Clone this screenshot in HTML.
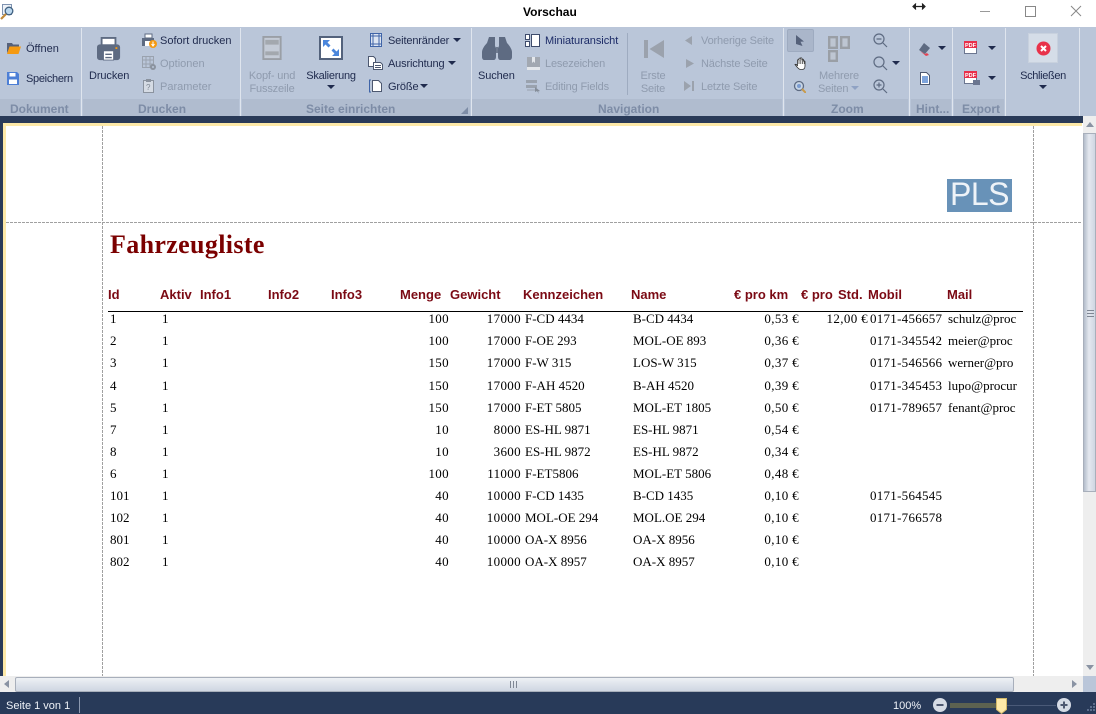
<!DOCTYPE html>
<html><head><meta charset="utf-8"><style>
html,body{margin:0;padding:0;width:1096px;height:714px;overflow:hidden;background:#fff;font-family:"Liberation Sans",sans-serif}
div,span,svg{position:absolute}
.t{font-size:11px;color:#1f2a4d;white-space:nowrap;line-height:13px;letter-spacing:-.15px;margin-top:1px}
.g{color:#8f9bae}
.gt{font-size:12px;font-weight:bold;color:#7d8ca6;white-space:nowrap;line-height:13px;text-align:center;margin-top:1px}
.gb{background:#b0bccf;height:17px;top:99px}
.sep{width:1px;background:#dfe5ee;top:28px;height:88px}
.c{text-align:center}
.h{font:bold 13px/14px "Liberation Sans",sans-serif;color:#7b0a14;white-space:nowrap;top:288px}
.r{font:13px/14px "Liberation Serif",serif;color:#000;white-space:nowrap}
.ar{text-align:right;letter-spacing:.35px}
span.r[style*="left:870px"]{letter-spacing:.27px}
.arw{width:0;height:0;border-left:4px solid transparent;border-right:4px solid transparent;border-top:4px solid #1f2a4d}
</style></head><body>

<!-- title bar -->
<div style="left:0;top:0;width:1096px;height:27px;background:#fff"></div>
<svg style="left:0;top:4px" width="15" height="16" viewBox="0 0 15 16"><path d="M2.500.500h9v10h-9z" fill="#eef2f7" stroke="#7f93b0"/><circle cx="9" cy="7" r="3.800" fill="#bcd8ee" stroke="#3f5f80" stroke-width="1.300"/><path d="M6 10l-5 5" stroke="#c08a3a" stroke-width="2.200"/></svg>
<span style="left:523px;top:5px;font-size:12px;font-weight:bold;line-height:14px;color:#000">Vorschau</span>
<svg style="left:912px;top:2px" width="14" height="9" viewBox="0 0 14 9"><path d="M1 4.500h12M4 1.500L1 4.500l3 3M10 1.500l3 3-3 3" fill="#222" stroke="#222" stroke-width="1.200"/></svg>
<div style="left:980px;top:11px;width:10px;height:1px;background:#999"></div>
<div style="left:1025px;top:6px;width:9px;height:9px;border:1px solid #888"></div>
<svg style="left:1070px;top:5px" width="12" height="12" viewBox="0 0 12 12"><path d="M1 1l10 10M11 1L1 11" stroke="#888" fill="none"/></svg>

<!-- ribbon -->
<div style="left:0;top:27px;width:1096px;height:89px;background:#bac6d9"></div>
<div style="left:0;top:116px;width:1083px;height:7px;background:#293a58"></div>
<div class="gb" style="left:0;width:80px"></div>
<div class="gb" style="left:83px;width:156px"></div>
<div class="gb" style="left:242px;width:228px"></div>
<div class="gb" style="left:472px;width:310px"></div>
<div class="gb" style="left:785px;width:123px"></div>
<div class="gb" style="left:911px;width:40px"></div>
<div class="gb" style="left:954px;width:50px"></div>
<div class="sep" style="left:81px"></div>
<div class="sep" style="left:240px"></div>
<div class="sep" style="left:471px"></div>
<div class="sep" style="left:783px"></div>
<div class="sep" style="left:909px"></div>
<div class="sep" style="left:952px"></div>
<div class="sep" style="left:1005px"></div>
<div class="sep" style="left:1079px"></div>
<div style="left:627px;top:33px;width:1px;height:62px;background:#9eabc0"></div>

<!-- Dokument -->
<svg style="left:7px;top:43px" width="14" height="12" viewBox="0 0 14 12"><path d="M0 0h5l1 1.500h6V4H3L0 10z" fill="#56617a"/><path d="M2.500 3.500H14l-2.500 7.500H0z" fill="#f59a12"/></svg>
<span class="t" style="left:26px;top:42px;letter-spacing:0">Öffnen</span>
<svg style="left:7px;top:72px" width="12" height="13" viewBox="0 0 12 13"><path d="M0 0h10l2 2v11H0z" fill="#4d7fd6"/><path d="M2.500 1h6v3.500h-6zM2 7.500h8V12H2z" fill="#fff"/></svg>
<span class="t" style="left:26px;top:72px;letter-spacing:-.3px">Speichern</span>
<span class="gt" style="left:10px;top:102px">Dokument</span>

<!-- Drucken -->
<svg style="left:97px;top:36px" width="24" height="26" viewBox="0 0 26 28"><path d="M5 2h15v8H5z" fill="#fff" stroke="#5e6b82" stroke-width="2"/><path d="M3 9h19a3 3 0 0 1 3 3v11a3 3 0 0 1-3 3H3a3 3 0 0 1-3-3V12a3 3 0 0 1 3-3z" fill="#5e6b82"/><path d="M7 16h11v10H7z" fill="#fff" stroke="#5e6b82"/><path d="M9 19h7v1.500H9zM9 22.500h7V24H9z" fill="#5e6b82"/><path d="M20 12h2v2h-2z" fill="#f59a12"/></svg>
<span class="t" style="left:89px;top:69px;letter-spacing:-.1px">Drucken</span>
<svg style="left:142px;top:33px" width="15" height="15" viewBox="0 0 15 15"><path d="M3 1h7v4H3z" fill="#fff" stroke="#5e6b82"/><path d="M0 5h12v8H0z" fill="#5e6b82"/><path d="M3 8h6v5H3z" fill="#fff"/><circle cx="11" cy="11" r="4" fill="#f59a12"/><path d="M11 8.500v4M9.500 11l1.500 2 1.500-2" stroke="#fff" fill="none"/></svg>
<span class="t" style="left:160px;top:34px;letter-spacing:0">Sofort drucken</span>
<svg style="left:142px;top:56px" width="15" height="15" viewBox="0 0 15 15"><path d="M.5.500h11v11H.5zM.5 4h11M.5 8h11M4 .500v11M8 .500v11" fill="none" stroke="#9aa2ae"/><circle cx="11" cy="11" r="3" fill="#8b939f"/><circle cx="11" cy="11" r="1" fill="#bac6d9"/></svg>
<span class="t g" style="left:160px;top:57px;letter-spacing:0">Optionen</span>
<svg style="left:143px;top:79px" width="11" height="14" viewBox="0 0 11 14"><path d="M.5 1.500h10v12H.5z" fill="#d5dbe4" stroke="#8b939f"/><path d="M3 0h5v3H3z" fill="#8b939f"/><text x="3" y="11" font-size="8" font-family="Liberation Sans" fill="#7f8894">?</text></svg>
<span class="t g" style="left:160px;top:80px;letter-spacing:0">Parameter</span>
<span class="gt" style="left:138px;top:102px">Drucken</span>

<!-- Seite einrichten -->
<svg style="left:262px;top:36px" width="20" height="24" viewBox="0 0 20 25"><path d="M1 1h18v23H1z" fill="#c4cbd6" stroke="#9a9fa6" stroke-width="2"/><path d="M3 4h14v5H3zM3 16h14v4H3z" fill="#a3a8ae"/></svg>
<span class="t g c" style="left:245px;top:69px;width:54px">Kopf- und</span>
<span class="t g c" style="left:245px;top:82px;width:54px">Fusszeile</span>
<svg style="left:319px;top:36px" width="24" height="24" viewBox="0 0 24 24"><path d="M1 1h22v22H1z" fill="#fff" stroke="#53627c" stroke-width="2"/><path d="M4 4h7L8.500 6.500l3 3-2 2-3-3L4 11zM20 20h-7l2.500-2.500-3-3 2-2 3 3L20 13z" fill="#4a86dc"/></svg>
<span class="t c" style="left:300px;top:69px;width:62px;letter-spacing:-.25px">Skalierung</span>
<div class="arw" style="left:327px;top:85px"></div>
<svg style="left:370px;top:33px" width="12" height="14" viewBox="0 0 12 14"><path d="M.5.500h11v13H.5z" fill="#dce5f2" stroke="#3f64a8"/><path d="M3 .500v13M9 .500v13M.5 3h11M.5 11h11" stroke="#3f64a8" fill="none"/></svg>
<span class="t" style="left:388px;top:34px">Seitenränder</span>
<div class="arw" style="left:453px;top:38px"></div>
<svg style="left:368px;top:56px" width="15" height="15" viewBox="0 0 15 15"><path d="M.5.500h5l2 2v8h-7z" fill="#fff" stroke="#4d5870"/><path d="M5.500 6.500h7l2 2v5h-9z" fill="#fff" stroke="#4d5870"/><path d="M7 9.500h6M7 11.500h6" stroke="#4d5870"/></svg>
<span class="t" style="left:388px;top:57px">Ausrichtung</span>
<div class="arw" style="left:448px;top:61px"></div>
<svg style="left:369px;top:79px" width="13" height="14" viewBox="0 0 13 14"><path d="M3.500 1.500h6l3 3v8h-9z" fill="#fff" stroke="#4d5870"/><path d="M.5 1v12M0 1h2M0 13h2" stroke="#3f64a8" fill="none"/></svg>
<span class="t" style="left:388px;top:80px">Größe</span>
<div class="arw" style="left:420px;top:84px"></div>
<span class="gt" style="left:306px;top:102px">Seite einrichten</span>
<svg style="left:461px;top:107px" width="7" height="7" viewBox="0 0 7 7"><path d="M7 0v7H0z" fill="#7d8ca6"/></svg>

<!-- Suchen -->
<svg style="left:482px;top:37px" width="30" height="23" viewBox="0 0 30 23"><path d="M7 0h6v9l1 2v9c0 1.500-1 3-2 3H2c-1 0-2-1.500-2-3v-5c0-3 3-7 5-9z" fill="#5e6b82"/><path d="M23 0h-6v9l-1 2v9c0 1.500 1 3 2 3h10c1 0 2-1.500 2-3v-5c0-3-3-7-5-9z" fill="#5e6b82"/><path d="M14 10h2v6h-2z" fill="#6f7b90"/></svg>
<span class="t" style="left:478px;top:69px;letter-spacing:-.1px">Suchen</span>
<svg style="left:525px;top:34px" width="15" height="13" viewBox="0 0 15 13"><path d="M.5.500h4v5h-4zM.5 7.500h4v5h-4zM6.500.500h8v12h-8z" fill="#fff" stroke="#3e4c6c"/></svg>
<span class="t" style="left:545px;top:34px;color:#1b2a66;letter-spacing:-.05px">Miniaturansicht</span>
<svg style="left:527px;top:57px" width="13" height="13" viewBox="0 0 13 13"><path d="M0 0h13v11H0z" fill="#a2a8b1"/><path d="M5 0h3v6L6.500 4.500 5 6zM0 10h13v3H0z" fill="#e4e7eb"/></svg>
<span class="t g" style="left:545px;top:57px">Lesezeichen</span>
<svg style="left:526px;top:80px" width="15" height="14" viewBox="0 0 15 14"><path d="M0 0h11v3H0zM0 5h11v3H0z" fill="#9aa2ae"/><path d="M1 10h8" stroke="#9aa2ae"/><path d="M9 7l5 4-2 .5 1 2.500-2-3-2 1z" fill="#858d99"/></svg>
<span class="t g" style="left:545px;top:80px">Editing Fields</span>
<svg style="left:644px;top:40px" width="20" height="18" viewBox="0 0 20 18"><path d="M0 0h4v18H0zM20 0v18L5.500 9z" fill="#9ba2ad"/></svg>
<span class="t g c" style="left:633px;top:69px;width:40px">Erste</span>
<span class="t g c" style="left:633px;top:82px;width:40px">Seite</span>
<svg style="left:685px;top:36px" width="8" height="9" viewBox="0 0 8 9"><path d="M7 0v9L0 4.500z" fill="#9ba2ad"/></svg>
<span class="t g" style="left:701px;top:34px">Vorherige Seite</span>
<svg style="left:686px;top:59px" width="8" height="9" viewBox="0 0 8 9"><path d="M0 0v9l8-4.500z" fill="#9ba2ad"/></svg>
<span class="t g" style="left:701px;top:57px">Nächste Seite</span>
<svg style="left:684px;top:81px" width="10" height="10" viewBox="0 0 10 10"><path d="M0 0l7 5-7 5zM8 0h2v10H8z" fill="#9ba2ad"/></svg>
<span class="t g" style="left:701px;top:80px">Letzte Seite</span>
<span class="gt" style="left:598px;top:102px">Navigation</span>

<!-- Zoom -->
<div style="left:787px;top:29px;width:25px;height:21px;background:#aab6ca;border:1px solid #9eabc0;border-radius:2px"></div>
<svg style="left:796px;top:35px" width="9" height="11" viewBox="0 0 9 11"><path d="M0 0l8 6.500-3.500.3L6.500 11 0 9z" fill="#55617a"/></svg>
<svg style="left:794px;top:57px" width="13" height="13" viewBox="0 0 13 13"><path d="M1 7.500c1-.5 2 .5 2.500 1.500V3a1 1 0 0 1 1.500 0V1.500a1 1 0 0 1 1.500 0V1a1 1 0 0 1 1.500.5V2.500a1 1 0 0 1 1.500 0V4a1 1 0 0 1 1.500 0.500V9c0 2-1 3.500-3 3.500H6.500C4.500 12.500 3 10 1 7.500z" fill="#fff" stroke="#333" stroke-width=".8"/><path d="M5 3v4M6.800 2v5M8.500 2.500V7M10.200 3.500V7" stroke="#333" stroke-width=".7"/></svg>
<svg style="left:793px;top:80px" width="13" height="13" viewBox="0 0 13 13"><circle cx="6" cy="6" r="4.500" fill="#c8d6e6" stroke="#5e6b82" stroke-width="1.300"/><circle cx="6" cy="6" r="2" fill="#7b9bd0"/><path d="M9 9l4 4" stroke="#c99a4a" stroke-width="2"/></svg>
<svg style="left:828px;top:36px" width="22" height="26" viewBox="0 0 22 26"><path d="M1.200 1.200h7.600v10.600H1.200zM13.200 1.200h7.600v10.600h-7.600zM1.200 15.200h7.600v9.600H1.200z" fill="#bec6d2" stroke="#9a9fa6" stroke-width="2.400"/></svg>
<span class="t g c" style="left:815px;top:69px;width:48px">Mehrere</span>
<span class="t g" style="left:818px;top:82px">Seiten</span>
<div class="arw" style="left:851px;top:86px;border-top-color:#8fa2c4"></div>
<svg style="left:873px;top:33px" width="15" height="15" viewBox="0 0 15 15"><circle cx="6" cy="6" r="5" fill="none" stroke="#5e6b82" stroke-width="1.200"/><path d="M3.500 6h5M10 10l4 4" stroke="#5e6b82" stroke-width="1.200"/></svg>
<svg style="left:873px;top:56px" width="15" height="15" viewBox="0 0 15 15"><circle cx="6" cy="6" r="5" fill="none" stroke="#5e6b82" stroke-width="1.200"/><path d="M10 10l4 4" stroke="#5e6b82" stroke-width="1.200"/></svg>
<div class="arw" style="left:892px;top:61px"></div>
<svg style="left:873px;top:79px" width="15" height="15" viewBox="0 0 15 15"><circle cx="6" cy="6" r="5" fill="none" stroke="#5e6b82" stroke-width="1.200"/><path d="M3.500 6h5M6 3.500v5M10 10l4 4" stroke="#5e6b82" stroke-width="1.200"/></svg>
<span class="gt" style="left:831px;top:102px">Zoom</span>

<!-- Hint -->
<svg style="left:919px;top:43px" width="13" height="13" viewBox="0 0 13 13"><path d="M5 0l6 5-5 6-6-4z" fill="#5e6b82"/><path d="M1 8l5 3 2-1 2 2-3 1z" fill="#e64050"/></svg>
<div class="arw" style="left:938px;top:46px"></div>
<svg style="left:920px;top:72px" width="10" height="13" viewBox="0 0 10 13"><path d="M.5.500h6l3 3v9h-9z" fill="#fff" stroke="#4d5870"/><path d="M2 4h6v7H2z" fill="#7ea4dc"/></svg>
<span class="gt" style="left:916px;top:102px">Hint...</span>

<!-- Export -->
<svg style="left:964px;top:41px" width="13" height="13" viewBox="0 0 13 13"><path d="M.5.500h12v12H.5z" fill="#fff" stroke="#6b7690"/><path d="M0 0h13v7H0z" fill="#e8304a"/><text x="1" y="6" font-size="5.500" font-weight="bold" font-family="Liberation Sans" fill="#fff">PDF</text></svg>
<div class="arw" style="left:988px;top:46px"></div>
<svg style="left:964px;top:71px" width="17" height="15" viewBox="0 0 17 15"><path d="M.5.500h12v12H.5z" fill="#fff" stroke="#6b7690"/><path d="M0 0h13v7H0z" fill="#e8304a"/><text x="1" y="6" font-size="5.500" font-weight="bold" font-family="Liberation Sans" fill="#fff">PDF</text><path d="M9 9h7v5H9z" fill="#6b7690"/></svg>
<div class="arw" style="left:988px;top:76px"></div>
<span class="gt" style="left:962px;top:102px">Export</span>

<!-- Schliessen -->
<div style="left:1028px;top:33px;width:30px;height:30px;background:#d5dde8;box-sizing:border-box;border:1px solid #c8d1de"></div>
<svg style="left:1036px;top:41px" width="15" height="15" viewBox="0 0 15 15"><circle cx="7.500" cy="7.500" r="7" fill="#e8324a"/><path d="M5 5l5 5M10 5l-5 5" stroke="#fff" stroke-width="2"/></svg>
<span class="t c" style="left:1013px;top:69px;width:60px;letter-spacing:-.35px">Schließen</span>
<div class="arw" style="left:1039px;top:85px"></div>

<!-- Document area -->
<div style="left:0;top:123px;width:1083px;height:553px;background:#fff"></div>
<div style="left:0;top:123px;width:3px;height:553px;background:#293a58"></div>
<div style="left:3px;top:123px;width:1079px;height:3px;background:#fde9a8"></div>
<div style="left:3px;top:123px;width:3px;height:553px;background:#fde9a8"></div>
<div style="left:102px;top:126px;width:1px;height:550px;background:repeating-linear-gradient(180deg,#a0a0a0 0 3px,transparent 3px 4px)"></div>
<div style="left:1033px;top:126px;width:1px;height:550px;background:repeating-linear-gradient(180deg,#a0a0a0 0 3px,transparent 3px 4px)"></div>
<div style="left:6px;top:222px;width:1076px;height:1px;background:repeating-linear-gradient(90deg,#a0a0a0 0 3px,transparent 3px 4px)"></div>

<div style="left:947px;top:179px;width:65px;height:33px;background:#6892b8"></div>
<span style="left:947px;top:177px;width:65px;text-align:center;font-size:32px;line-height:34px;color:#eef3f8;letter-spacing:-.5px">PLS</span>

<span style="left:110px;top:230px;font:bold 26px/30px 'Liberation Serif',serif;color:#7b0000;white-space:nowrap;letter-spacing:.35px">Fahrzeugliste</span>

<span class="h" style="left:108px">Id</span>
<span class="h" style="left:160px">Aktiv</span>
<span class="h" style="left:200px">Info1</span>
<span class="h" style="left:268px">Info2</span>
<span class="h" style="left:331px">Info3</span>
<span class="h" style="left:400px">Menge</span>
<span class="h" style="left:450px">Gewicht</span>
<span class="h" style="left:523px">Kennzeichen</span>
<span class="h" style="left:631px">Name</span>
<span class="h" style="left:734px">€ pro km</span>
<span class="h" style="left:801px">€ pro</span>
<span class="h" style="left:838px">Std.</span>
<span class="h" style="left:868px">Mobil</span>
<span class="h" style="left:947px">Mail</span>
<div style="left:108px;top:311px;width:915px;height:1px;background:#000"></div>

<div style="left:0;top:312px;width:1083px;height:0">
<span class="r" style="left:110px;top:0">1</span><span class="r" style="left:162px;top:0">1</span><span class="r ar" style="left:400px;width:49px;top:0">100</span><span class="r ar" style="left:470px;width:51px;top:0">17000</span><span class="r" style="left:525px;top:0">F-CD 4434</span><span class="r" style="left:633px;top:0">B-CD 4434</span><span class="r ar" style="left:740px;width:59px;top:0">0,53 €</span><span class="r ar" style="left:810px;width:58px;top:0">12,00 €</span><span class="r" style="left:870px;top:0">0171-456657</span><span class="r" style="left:948px;top:0">schulz@proc</span>

<span class="r" style="left:110px;top:22px">2</span><span class="r" style="left:162px;top:22px">1</span><span class="r ar" style="left:400px;width:49px;top:22px">100</span><span class="r ar" style="left:470px;width:51px;top:22px">17000</span><span class="r" style="left:525px;top:22px">F-OE 293</span><span class="r" style="left:633px;top:22px">MOL-OE 893</span><span class="r ar" style="left:740px;width:59px;top:22px">0,36 €</span><span class="r" style="left:870px;top:22px">0171-345542</span><span class="r" style="left:948px;top:22px">meier@proc</span>

<span class="r" style="left:110px;top:44px">3</span><span class="r" style="left:162px;top:44px">1</span><span class="r ar" style="left:400px;width:49px;top:44px">150</span><span class="r ar" style="left:470px;width:51px;top:44px">17000</span><span class="r" style="left:525px;top:44px">F-W 315</span><span class="r" style="left:633px;top:44px">LOS-W 315</span><span class="r ar" style="left:740px;width:59px;top:44px">0,37 €</span><span class="r" style="left:870px;top:44px">0171-546566</span><span class="r" style="left:948px;top:44px">werner@pro</span>

<span class="r" style="left:110px;top:67px">4</span><span class="r" style="left:162px;top:67px">1</span><span class="r ar" style="left:400px;width:49px;top:67px">150</span><span class="r ar" style="left:470px;width:51px;top:67px">17000</span><span class="r" style="left:525px;top:67px">F-AH 4520</span><span class="r" style="left:633px;top:67px">B-AH 4520</span><span class="r ar" style="left:740px;width:59px;top:67px">0,39 €</span><span class="r" style="left:870px;top:67px">0171-345453</span><span class="r" style="left:948px;top:67px">lupo@procur</span>

<span class="r" style="left:110px;top:89px">5</span><span class="r" style="left:162px;top:89px">1</span><span class="r ar" style="left:400px;width:49px;top:89px">150</span><span class="r ar" style="left:470px;width:51px;top:89px">17000</span><span class="r" style="left:525px;top:89px">F-ET 5805</span><span class="r" style="left:633px;top:89px">MOL-ET 1805</span><span class="r ar" style="left:740px;width:59px;top:89px">0,50 €</span><span class="r" style="left:870px;top:89px">0171-789657</span><span class="r" style="left:948px;top:89px">fenant@proc</span>

<span class="r" style="left:110px;top:111px">7</span><span class="r" style="left:162px;top:111px">1</span><span class="r ar" style="left:400px;width:49px;top:111px">10</span><span class="r ar" style="left:470px;width:51px;top:111px">8000</span><span class="r" style="left:525px;top:111px">ES-HL 9871</span><span class="r" style="left:633px;top:111px">ES-HL 9871</span><span class="r ar" style="left:740px;width:59px;top:111px">0,54 €</span>

<span class="r" style="left:110px;top:133px">8</span><span class="r" style="left:162px;top:133px">1</span><span class="r ar" style="left:400px;width:49px;top:133px">10</span><span class="r ar" style="left:470px;width:51px;top:133px">3600</span><span class="r" style="left:525px;top:133px">ES-HL 9872</span><span class="r" style="left:633px;top:133px">ES-HL 9872</span><span class="r ar" style="left:740px;width:59px;top:133px">0,34 €</span>

<span class="r" style="left:110px;top:155px">6</span><span class="r" style="left:162px;top:155px">1</span><span class="r ar" style="left:400px;width:49px;top:155px">100</span><span class="r ar" style="left:470px;width:51px;top:155px">11000</span><span class="r" style="left:525px;top:155px">F-ET5806</span><span class="r" style="left:633px;top:155px">MOL-ET 5806</span><span class="r ar" style="left:740px;width:59px;top:155px">0,48 €</span>

<span class="r" style="left:110px;top:177px">101</span><span class="r" style="left:162px;top:177px">1</span><span class="r ar" style="left:400px;width:49px;top:177px">40</span><span class="r ar" style="left:470px;width:51px;top:177px">10000</span><span class="r" style="left:525px;top:177px">F-CD 1435</span><span class="r" style="left:633px;top:177px">B-CD 1435</span><span class="r ar" style="left:740px;width:59px;top:177px">0,10 €</span><span class="r" style="left:870px;top:177px">0171-564545</span>

<span class="r" style="left:110px;top:199px">102</span><span class="r" style="left:162px;top:199px">1</span><span class="r ar" style="left:400px;width:49px;top:199px">40</span><span class="r ar" style="left:470px;width:51px;top:199px">10000</span><span class="r" style="left:525px;top:199px">MOL-OE 294</span><span class="r" style="left:633px;top:199px">MOL.OE 294</span><span class="r ar" style="left:740px;width:59px;top:199px">0,10 €</span><span class="r" style="left:870px;top:199px">0171-766578</span>

<span class="r" style="left:110px;top:221px">801</span><span class="r" style="left:162px;top:221px">1</span><span class="r ar" style="left:400px;width:49px;top:221px">40</span><span class="r ar" style="left:470px;width:51px;top:221px">10000</span><span class="r" style="left:525px;top:221px">OA-X 8956</span><span class="r" style="left:633px;top:221px">OA-X 8956</span><span class="r ar" style="left:740px;width:59px;top:221px">0,10 €</span>

<span class="r" style="left:110px;top:243px">802</span><span class="r" style="left:162px;top:243px">1</span><span class="r ar" style="left:400px;width:49px;top:243px">40</span><span class="r ar" style="left:470px;width:51px;top:243px">10000</span><span class="r" style="left:525px;top:243px">OA-X 8957</span><span class="r" style="left:633px;top:243px">OA-X 8957</span><span class="r ar" style="left:740px;width:59px;top:243px">0,10 €</span>
</div>

<!-- vertical scrollbar -->
<div style="left:1083px;top:116px;width:13px;height:560px;background:#eeeeee"></div>
<div style="left:1083px;top:133px;width:13px;height:359px;background:linear-gradient(90deg,#b4bdcb,#e4e8ef 45%,#cfd6e2);border:1px solid #a8afbb;box-sizing:border-box"></div>
<svg style="left:1086px;top:122px" width="8" height="5" viewBox="0 0 8 5"><path d="M0 5l4-5 4 5z" fill="#8a93a3"/></svg>
<svg style="left:1086px;top:665px" width="8" height="5" viewBox="0 0 8 5"><path d="M0 0l4 5 4-5z" fill="#8a93a3"/></svg>
<div style="left:1087px;top:310px;width:7px;height:7px;background:repeating-linear-gradient(180deg,#7f8794 0 1px,transparent 1px 3px)"></div>

<!-- horizontal scrollbar -->
<div style="left:0;top:676px;width:1083px;height:16px;background:#eeeeee"></div>
<div style="left:1083px;top:676px;width:13px;height:16px;background:#bac6d9"></div>
<div style="left:15px;top:677px;width:999px;height:15px;background:linear-gradient(180deg,#eef1f5,#dfe4ec 45%,#cfd6e2);border:1px solid #a8afbb;box-sizing:border-box;border-radius:2px"></div>
<svg style="left:4px;top:680px" width="5" height="8" viewBox="0 0 5 8"><path d="M5 0L0 4l5 4z" fill="#8a93a3"/></svg>
<svg style="left:1072px;top:680px" width="5" height="8" viewBox="0 0 5 8"><path d="M0 0l5 4-5 4z" fill="#8a93a3"/></svg>
<div style="left:510px;top:681px;width:7px;height:7px;background:repeating-linear-gradient(90deg,#7f8794 0 1px,transparent 1px 3px)"></div>

<!-- status bar -->
<div style="left:0;top:692px;width:1096px;height:22px;background:#283a59"></div>
<span class="t" style="left:6px;top:699px;color:#eef2f8;letter-spacing:0">Seite 1 von 1</span>
<div style="left:79px;top:697px;width:1px;height:16px;background:#8c99b0"></div>
<span class="t" style="left:893px;top:699px;color:#eef2f8;letter-spacing:0">100%</span>
<div style="left:950px;top:703px;width:51px;height:5px;background:#5c6250"></div>
<div style="left:1006px;top:705px;width:50px;height:1px;background:#4a5a78"></div>
<svg style="left:933px;top:698px" width="14" height="14" viewBox="0 0 14 14"><circle cx="7" cy="7" r="7" fill="#d5dbe5"/><path d="M3.500 7h7" stroke="#4d5870" stroke-width="2"/></svg>
<svg style="left:996px;top:698px" width="11" height="16" viewBox="0 0 11 16"><path d="M.5.500h10v11l-5 4-5-4z" fill="#fde9a8" stroke="#d2b86a"/></svg>
<svg style="left:1057px;top:698px" width="14" height="14" viewBox="0 0 14 14"><circle cx="7" cy="7" r="7" fill="#d5dbe5"/><path d="M3.500 7h7M7 3.500v7" stroke="#4d5870" stroke-width="2"/></svg>
<svg style="left:1086px;top:703px" width="10" height="10" viewBox="0 0 10 10"><path d="M7 0h2v2H7zM4 3h2v2H4zM7 3h2v2H7zM1 6h2v2H1zM4 6h2v2H4zM7 6h2v2H7z" fill="#5c6d8c"/></svg>
</body></html>
